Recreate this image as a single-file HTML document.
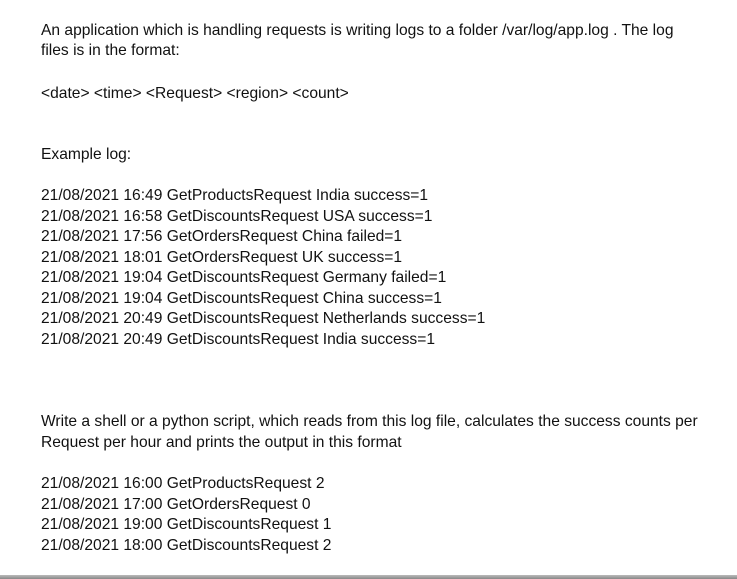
<html><head><style>
body{margin:0;width:737px;height:579px;background:#fff;overflow:hidden;position:relative;font-family:"Liberation Sans",Arial,sans-serif;font-size:15.6px;color:#111}
div.l{position:absolute;left:41px;line-height:20px;white-space:nowrap}
.bar{position:absolute;left:0;top:575px;width:737px;height:4px;background:linear-gradient(#bbb,#888)}
</style></head><body>
<div class="l" style="top:21px">An application which is handling requests is writing logs to a folder /var/log/app.log . The log</div>
<div class="l" style="top:41px">files is in the format:</div>
<div class="l" style="top:84px">&lt;date&gt; &lt;time&gt; &lt;Request&gt; &lt;region&gt; &lt;count&gt;</div>
<div class="l" style="top:145px">Example log:</div>
<div class="l" style="top:186px">21/08/2021 16:49 GetProductsRequest India success=1</div>
<div class="l" style="top:206.5px">21/08/2021 16:58 GetDiscountsRequest USA success=1</div>
<div class="l" style="top:227px">21/08/2021 17:56 GetOrdersRequest China failed=1</div>
<div class="l" style="top:247.5px">21/08/2021 18:01 GetOrdersRequest UK success=1</div>
<div class="l" style="top:268px">21/08/2021 19:04 GetDiscountsRequest Germany failed=1</div>
<div class="l" style="top:288.5px">21/08/2021 19:04 GetDiscountsRequest China success=1</div>
<div class="l" style="top:309px">21/08/2021 20:49 GetDiscountsRequest Netherlands success=1</div>
<div class="l" style="top:329.5px">21/08/2021 20:49 GetDiscountsRequest India success=1</div>
<div class="l" style="top:412px">Write a shell or a python script, which reads from this log file, calculates the success counts per</div>
<div class="l" style="top:433px">Request per hour and prints the output in this format</div>
<div class="l" style="top:474px">21/08/2021 16:00 GetProductsRequest 2</div>
<div class="l" style="top:494.5px">21/08/2021 17:00 GetOrdersRequest 0</div>
<div class="l" style="top:515px">21/08/2021 19:00 GetDiscountsRequest 1</div>
<div class="l" style="top:535.5px">21/08/2021 18:00 GetDiscountsRequest 2</div>
<div class="bar"></div>
</body></html>
